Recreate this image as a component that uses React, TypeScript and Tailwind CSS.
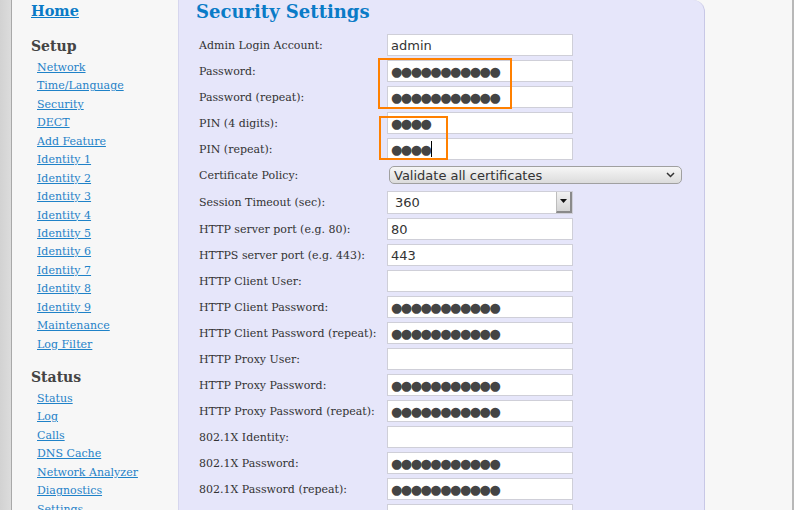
import React from 'react';

const setupLinks = [
  'Network', 'Time/Language', 'Security', 'DECT', 'Add Feature',
  'Identity 1', 'Identity 2', 'Identity 3', 'Identity 4', 'Identity 5',
  'Identity 6', 'Identity 7', 'Identity 8', 'Identity 9', 'Maintenance', 'Log Filter',
];
const statusLinks = ['Status', 'Log', 'Calls', 'DNS Cache', 'Network Analyzer', 'Diagnostics', 'Settings'];

const DOTS = '●●●●●●●●●●●';

type Row = { label: string; value?: string; cursor?: boolean };

const topRows: Row[] = [
  { label: 'Admin Login Account:', value: 'admin' },
  { label: 'Password:', value: DOTS },
  { label: 'Password (repeat):', value: DOTS },
  { label: 'PIN (4 digits):', value: '●●●●' },
  { label: 'PIN (repeat):', value: '●●●●', cursor: true },
];

const bottomRows: Row[] = [
  { label: 'HTTP server port (e.g. 80):', value: '80' },
  { label: 'HTTPS server port (e.g. 443):', value: '443' },
  { label: 'HTTP Client User:', value: '' },
  { label: 'HTTP Client Password:', value: DOTS },
  { label: 'HTTP Client Password (repeat):', value: DOTS },
  { label: 'HTTP Proxy User:', value: '' },
  { label: 'HTTP Proxy Password:', value: DOTS },
  { label: 'HTTP Proxy Password (repeat):', value: DOTS },
  { label: '802.1X Identity:', value: '' },
  { label: '802.1X Password:', value: DOTS },
  { label: '802.1X Password (repeat):', value: DOTS },
  { label: '802.1X CA Certificate:', value: '' },
];

const serif = { fontFamily: '"DejaVu Serif", "Liberation Serif", serif' };

const Field = ({ value, cursor }: { value?: string; cursor?: boolean }) => {
  const dots = !!value && value.startsWith('●');
  return (
    <div className="flex items-center w-[186px] h-[22px] bg-white border border-[#cfcfd8] pl-[3px] text-[13px] text-[#333] font-['DejaVu_Sans',sans-serif] leading-none whitespace-nowrap overflow-hidden">
      <span className={dots ? 'tracking-[-1.5px] text-[#444]' : ''}>{value}</span>
      {cursor && <span className="inline-block ml-[1px] w-px h-[16px] bg-black" />}
    </div>
  );
};

const FormRow = ({ row }: { row: Row }) => (
  <div className="flex items-center h-[26px]">
    <div className="w-[188px] pt-[2px] text-[11px] text-[#333]" style={serif}>{row.label}</div>
    <Field value={row.value} cursor={row.cursor} />
  </div>
);

export default function App() {
  return (
    <div className="relative flex w-[794px] h-[510px] overflow-hidden bg-[#f7f7f7]">
      {/* left gutter */}
      <div className="w-[12px] shrink-0 bg-gradient-to-r from-[#d2d2d2] to-[#dcdcdc] border-r border-[#a9a9a9]" />

      {/* sidebar */}
      <div className="w-[166px] shrink-0 bg-[#f7f7f7] pl-[19px]" style={serif}>
        <a className="block h-[22px] leading-[22px] text-[14.5px] font-bold text-[#0a7bc7] underline">Home</a>
        <div className="mt-[14px] h-[20px] leading-[20px] text-[14px] font-bold text-[#444]">Setup</div>
        <div className="mt-[1px] pl-[6px]">
          {setupLinks.map((l) => (
            <div key={l} className="h-[18.45px] leading-[18.45px]">
              <a className="text-[11px] text-[#1f82c8] underline">{l}</a>
            </div>
          ))}
        </div>
        <div className="mt-[15px] h-[20px] leading-[20px] text-[14px] font-bold text-[#444]">Status</div>
        <div className="mt-[1px] pl-[6px]">
          {statusLinks.map((l) => (
            <div key={l} className="h-[18.45px] leading-[18.45px]">
              <a className="text-[11px] text-[#1f82c8] underline">{l}</a>
            </div>
          ))}
        </div>
      </div>

      {/* main panel */}
      <div className="w-[527px] shrink-0 bg-[#e6e6fa] border-l border-[#d6d6ee] border-r border-r-[#c8c8e6] rounded-tr-[12px]">
        <h1 className="pl-[17px] h-[24px] leading-[24px] text-[18px] font-bold text-[#0a7bc7]" style={serif}>
          Security Settings
        </h1>
        <div className="mt-[8px] pl-[20px]">
          {topRows.map((r) => (
            <FormRow key={r.label} row={r} />
          ))}
          <div className="flex items-center h-[26px]">
            <div className="w-[190px] pt-[2px] text-[11px] text-[#333]" style={serif}>Certificate Policy:</div>
            <div className="flex items-center justify-between w-[293px] h-[18px] rounded-[5px] border border-[#a0a0a0] bg-gradient-to-b from-[#f6f6f6] to-[#dcdcdc] pl-[4px] pr-[6px] text-[13px] text-[#333] font-['DejaVu_Sans',sans-serif] leading-none">
              <span>Validate all certificates</span>
              <svg width="9" height="6" viewBox="0 0 9 6">
                <path d="M1 1 L4.5 4.5 L8 1" fill="none" stroke="#333" strokeWidth="1.5" />
              </svg>
            </div>
          </div>
          <div className="flex items-center h-[28px]">
            <div className="w-[188px] pt-[2px] text-[11px] text-[#333]" style={serif}>Session Timeout (sec):</div>
            <div className="flex items-stretch w-[186px] h-[23px] bg-white border border-[#cfcfd8] text-[13px] text-[#333] font-['DejaVu_Sans',sans-serif]">
              <span className="flex-1 flex items-center pl-[7px] leading-none">360</span>
              <span className="w-[16px] flex items-center justify-center bg-gradient-to-b from-[#f2f2f2] to-[#d4d4d4] border-l border-[#bdbdbd] border-r-2 border-r-[#8a8a8a] border-b-2 border-b-[#8a8a8a]">
                <svg width="7" height="4" viewBox="0 0 7 4">
                  <path d="M0 0 H7 L3.5 4 Z" fill="#111" />
                </svg>
              </span>
            </div>
          </div>
          {bottomRows.map((r) => (
            <FormRow key={r.label} row={r} />
          ))}
        </div>
      </div>

      {/* right filler */}
      <div className="flex-1 bg-[#f7f7f7] border-r-2 border-[#b8b8b8]" />

      {/* annotation boxes */}
      <div className="absolute left-[378px] top-[58px] w-[134px] h-[51px] border-2 border-[#ff8000]" />
      <div className="absolute left-[379px] top-[116px] w-[69px] h-[44px] border-2 border-[#ff8000]" />
    </div>
  );
}
